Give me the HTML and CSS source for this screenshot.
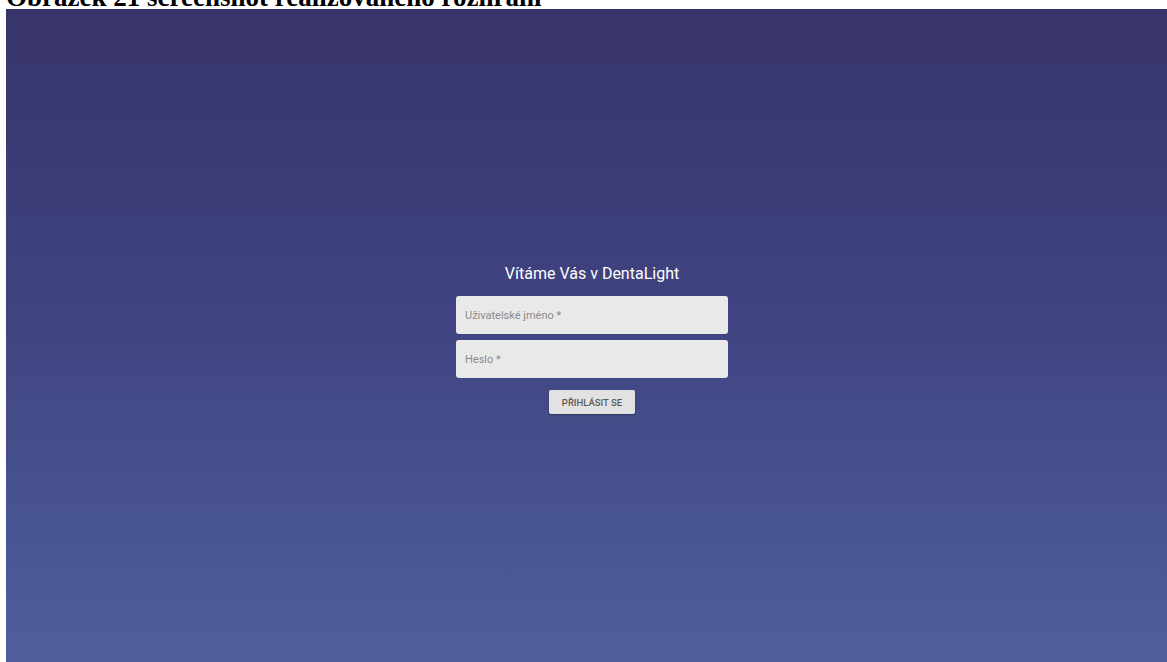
FILE: index.html
```html
<!DOCTYPE html>
<html lang="cs">
<head>
<meta charset="utf-8">
<title>DentaLight – přihlášení</title>
<link rel="stylesheet" href="styles.css">
</head>
<body>
  <div class="caption"><p class="caption-text">Obrázek 21 screenshot realizovaného rozhraní</p></div>
  <main class="screen">
    <form class="login">
      <h1 class="login-title">Vítáme Vás v DentaLight</h1>
      <label class="field"><input class="field-input" type="text" placeholder="Uživatelské jméno *"></label>
      <label class="field"><input class="field-input" type="password" placeholder="Heslo *"></label>
      <button class="login-button" type="button">Přihlásit se</button>
    </form>
  </main>
</body>
</html>
```
FILE: styles.css
```css
html, body {
  margin: 0;
  padding: 0;
  background: #ffffff;
}

body {
  width: 1167px;
  height: 662px;
  overflow: hidden;
  display: flex;
  flex-direction: column;
}

/* figure caption, partly cut by the page top */
.caption {
  height: 9px;
  overflow: hidden;
  padding-left: 6px;
}

.caption-text {
  margin: -7px 0 0;
  font-family: "Liberation Serif", serif;
  font-weight: bold;
  font-size: 27px;
  line-height: 9px;
  color: #000;
  white-space: nowrap;
}

/* app screen */
.screen {
  flex: 1;
  margin-left: 6px;
  background: linear-gradient(180deg, #37346a 0%, #3f4380 45%, #4f5f9d 100%);
  display: flex;
  justify-content: center;
  padding-left: 11px;
  padding-top: 255px;
  box-sizing: border-box;
  font-family: Roboto, "Noto Sans", sans-serif;
}

.login {
  width: 272px;
  display: flex;
  flex-direction: column;
  align-items: center;
}

.login-title {
  margin: 0 0 12px;
  font-size: 16px;
  line-height: 20px;
  font-weight: 400;
  color: #ffffff;
  white-space: nowrap;
}

.field {
  display: block;
  width: 100%;
  margin-bottom: 6px;
}

.field-input {
  display: block;
  width: 100%;
  height: 38px;
  box-sizing: border-box;
  border: none;
  border-radius: 3px;
  background: #e9e9e9;
  padding: 0 9px;
  font-family: Roboto, "Noto Sans", sans-serif;
  font-size: 11px;
  color: #333;
  outline: none;
}

.field-input::placeholder {
  color: #8a8a8a;
}

.login-button {
  margin-top: 6px;
  height: 24px;
  width: 86px;
  border: none;
  border-radius: 2px;
  background: #e2e2e2;
  box-shadow: 0 1px 2px rgba(0, 0, 0, 0.3);
  font-family: Roboto, "Noto Sans", sans-serif;
  font-weight: 500;
  font-size: 9.5px;
  text-transform: uppercase;
  color: #5a5a5a;
  padding: 0;
}
```
